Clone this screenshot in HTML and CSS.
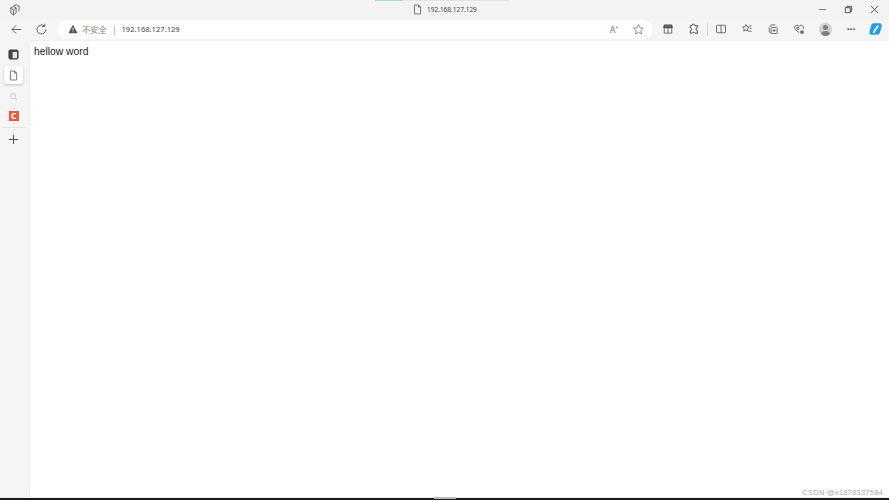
FILE: index.html
```html
<!DOCTYPE html>
<html lang="zh-CN">
  <head>
    <meta charset="UTF-8" />
    <title>192.168.127.129</title>
    <link rel="stylesheet" href="styles.css">
  </head>
  <body>
    <div class="window">
      <header class="titlebar">
        <svg class="workspace-icon" viewBox="0 0 16 16"><path d="M6 2.200 10 1l3.500 2v5.500L12 9.500M2.500 5 6 3.500 9.500 5v7L6 14.500 2.500 12zM2.500 5 6 8l3.500-3M6 8v6.500"/></svg>
        <div class="tab-title">
          <span class="tab-accent"></span>
          <svg class="page-icon" viewBox="0 0 16 16"><path d="M3.500 1.500h6l3 3v10h-9zM9.500 1.500v3h3"/></svg>
          <span>192.168.127.129</span>
        </div>
        <div class="window-controls">
          <svg class="win-min" viewBox="0 0 10 10"><path d="M1 5h8"/></svg>
          <svg viewBox="0 0 10 10"><path d="M1.500 3h5.500v5.500h-5.500zM3 3V1.500h5.500V7H7"/></svg>
          <svg viewBox="0 0 10 10"><path d="M1 1l8 8M9 1l-8 8"/></svg>
        </div>
      </header>

      <nav class="toolbar">
        <button class="nav-btn back">
          <svg viewBox="0 0 16 16"><path d="M14 8H2.500M7.500 3 2.500 8l5 5"/></svg>
        </button>
        <button class="nav-btn reload">
          <svg viewBox="0 0 16 16"><path d="M13.500 8A5.500 5.500 0 1 1 11.500 3.700M12 1v3.300H8.700"/></svg>
        </button>
        <div class="address">
          <svg class="warn-icon" viewBox="0 0 12 12"><path d="M6 1 11.500 11H.5z"/><path class="warn-mark" d="M6 4.500v3.200M6 8.800v1"/></svg>
          <span class="not-secure">不安全</span>
          <span class="separator">|</span>
          <span class="url">192.168.127.129</span>
          <span class="address-end">
            <span class="read-aloud">A<sup>ᴧ</sup></span>
            <svg class="addr-icon" viewBox="0 0 16 16"><path d="m8 2 1.800 3.900 4.200.5-3.100 2.900.8 4.200L8 11.400l-3.700 2.100.8-4.200L2 6.400l4.200-.5z"/></svg>
          </span>
        </div>
        <div class="tools">
          <span class="tool"><svg viewBox="0 0 16 16"><path class="fill" d="M3 2.500h10l1 4H2z"/><path d="M3 7v6.500h10V7M8 7v6.500"/></svg></span>
          <span class="tool"><svg viewBox="0 0 16 16"><path class="bold" d="M5 3.500a2 2 0 0 1 4 0h3.500V6a2.200 2.200 0 0 0 0 4.300v3.200H9a2 2 0 0 0-3.500 0H3v-3a2.200 2.200 0 0 0 0-4.300V3.500z"/></svg></span>
          <span class="tool-divider"></span>
          <span class="tool"><svg viewBox="0 0 16 16"><path d="M2 4a1 1 0 0 1 1-1h10a1 1 0 0 1 1 1v8a1 1 0 0 1-1 1H3a1 1 0 0 1-1-1zM8 3v10"/></svg></span>
          <span class="tool"><svg viewBox="0 0 16 16"><path d="m6.500 2 1.400 3 3.100.4-2.300 2.200.6 3.200-2.800-1.600-2.800 1.600.6-3.200L2 5.400l3.100-.4zM11 4h3M11.500 7.500H14M10 11h4"/></svg></span>
          <span class="tool"><svg viewBox="0 0 16 16"><path d="M5 5V3.500a1 1 0 0 1 1-1h5M6.500 6h6a1 1 0 0 1 1 1v6a1 1 0 0 1-1 1h-6a1 1 0 0 1-1-1V7a1 1 0 0 1 1-1zM9.500 8v4M7.500 10h4M3 6v5.500a1 1 0 0 0 1 1h1"/></svg></span>
          <span class="tool"><svg viewBox="0 0 16 16"><path d="M8 13 3 8.500a3 3 0 0 1 0-4.500 3 3 0 0 1 5 .5 3 3 0 0 1 5-.5 3 3 0 0 1 .5 4"/><circle cx="6.500" cy="7" r="1.500"/><circle class="green" cx="12" cy="12" r="2.500"/></svg></span>
          <span class="tool"><span class="avatar"><span class="avatar-head"></span><span class="avatar-body"></span></span></span>
          <span class="tool more">···</span>
          <span class="copilot"><svg viewBox="0 0 16 16"><path class="cop-blue" d="M5 1.500h7c2 0 3 1.500 2.500 3.500l-2 7c-.5 1.500-1.500 2.500-3 2.500H3c-2 0-3-1.500-2.500-3.500l2-7C3 2.500 3.800 1.500 5 1.500z"/><path class="cop-light" d="M10.500 4 5 12.500"/></svg></span>
        </div>
      </nav>

      <div class="body-row">
        <aside class="sidebar">
          <span class="side-btn"><svg viewBox="0 0 12 12"><rect class="side-dark" x="1" y="1" width="10" height="10" rx="1.500"/><path class="side-pane" d="M5 3.200h4.800v6.800H5z"/></svg></span>
          <span class="side-btn active"><svg viewBox="0 0 16 16"><path d="M3.500 1.500h6l3 3v10h-9zM9.500 1.500v3h3"/></svg></span>
          <span class="side-btn muted"><svg viewBox="0 0 12 12"><circle cx="5.500" cy="5.500" r="3.500"/><path d="m8 8 2.500 2.500"/></svg></span>
          <span class="side-btn"><span class="csdn">C</span></span>
          <span class="side-rule"></span>
          <span class="side-btn plus"><svg viewBox="0 0 12 12"><path d="M6 1v10M1 6h10"/></svg></span>
        </aside>
        <main class="content">
          <p class="page-text">hellow word</p>
          <span class="watermark">CSDN @x1878337584</span>
        </main>
      </div>
      <footer class="taskbar"><span class="task-thumb"></span></footer>
    </div>
  </body>
</html>
```

FILE: styles.css
```css
* {
  box-sizing: border-box;
}
html, body {
  margin: 0;
  height: 100%;
  overflow: hidden;
}
body {
  font-family: "Noto Sans", "Noto Sans CJK SC", sans-serif;
  color: #222;
  background: #f5f5f5;
}
svg {
  display: block;
  fill: none;
  stroke: #444;
  stroke-width: 1;
}
.window {
  display: flex;
  flex-direction: column;
  height: 500px;
}

/* title bar */
.titlebar {
  position: relative;
  display: flex;
  align-items: center;
  height: 19px;
  flex: none;
  padding-left: 9px;
  background: #f3f3f3;
}
.workspace-icon {
  width: 12px;
  height: 12px;
}
.tab-title {
  display: flex;
  align-items: center;
  gap: 4px;
  margin-left: 391px;
  font-size: 6.500px;
  color: #444;
}
.tab-title .page-icon {
  width: 11px;
  height: 11px;
}
.tab-accent {
  position: absolute;
  left: 375px;
  top: 0;
  width: 135px;
  height: 1px;
  background: linear-gradient(to right, #a5dcd6 0 28px, #e4e4e4 28px);
}
.window-controls {
  display: flex;
  gap: 17px;
  margin-left: auto;
  padding-right: 10px;
}
.window-controls svg {
  width: 9px;
  height: 9px;
}
.window-controls .win-min {
  stroke: #777;
}

/* toolbar */
.toolbar {
  display: flex;
  align-items: center;
  height: 22px;
  flex: none;
  padding-bottom: 2px;
  background: #f5f5f5;
}
.nav-btn {
  width: 25px;
  height: 20px;
  display: flex;
  align-items: center;
  justify-content: center;
  padding: 0;
  border: 0;
  background: none;
}
.nav-btn svg {
  width: 13px;
  height: 13px;
}
.back {
  margin-left: 4px;
}
.address {
  display: flex;
  align-items: center;
  width: 596px;
  height: 19px;
  margin-left: 3px;
  padding: 0 8px 0 11px;
  background: #fff;
  border-radius: 10px;
  font-size: 8.300px;
}
.warn-icon {
  width: 10px;
  height: 10px;
  fill: #555;
  stroke: none;
}
.warn-mark {
  stroke: #fff;
  stroke-width: 1;
}
.not-secure {
  margin-left: 4px;
  color: #888;
}
.separator {
  margin-left: 5px;
  color: #888;
}
.url {
  margin-left: 5px;
  font-size: 7.600px;
  color: #444;
}
.address-end {
  display: flex;
  align-items: center;
  gap: 14px;
  margin-left: auto;
}
.read-aloud {
  font-size: 9px;
  line-height: 1;
  color: #777;
}
.read-aloud sup {
  font-size: 5px;
}
.addr-icon {
  width: 13px;
  height: 13px;
  stroke: #777;
}
.tools {
  display: flex;
  align-items: center;
  margin-left: 2px;
}
.tool {
  display: flex;
  align-items: center;
  justify-content: center;
  width: 26px;
  height: 20px;
}
.tool svg {
  width: 12px;
  height: 12px;
}
.tool .fill {
  fill: #666;
}
.tool .bold {
  stroke-width: 1.300;
}
.tool .green {
  fill: #2e8b3d;
  stroke: none;
}
.tool-divider {
  width: 1px;
  height: 13px;
  background: #d4d4d4;
}
.avatar {
  position: relative;
  display: block;
  width: 13px;
  height: 13px;
  overflow: hidden;
  border-radius: 50%;
  background: #cfcfcf;
}
.avatar-head {
  position: absolute;
  left: 4px;
  top: 2px;
  width: 5px;
  height: 5px;
  border-radius: 50%;
  background: #808080;
}
.avatar-body {
  position: absolute;
  left: 2px;
  top: 8px;
  width: 9px;
  height: 7px;
  border-radius: 50%;
  background: #808080;
}
.more {
  font-size: 10px;
  font-weight: 700;
  color: #444;
}
.copilot {
  margin-left: 5px;
}
.copilot svg {
  width: 14px;
  height: 14px;
  stroke: none;
}
.cop-blue {
  fill: #2a9be0;
}
.cop-light {
  stroke: #bdf0e6;
  stroke-width: 2.500;
}

/* sidebar + page */
.body-row {
  display: flex;
  flex: 1;
  min-height: 0;
}
.sidebar {
  display: flex;
  flex-direction: column;
  align-items: center;
  width: 30px;
  flex: none;
  padding: 2px 3px 0 0;
}
.side-btn {
  display: flex;
  align-items: center;
  justify-content: center;
  width: 19px;
  height: 18px;
  margin-top: 2px;
}
.side-btn svg {
  width: 11px;
  height: 11px;
}
.side-dark {
  fill: #444;
}
.side-pane {
  fill: #e6e6e6;
  stroke: none;
}
.active {
  margin-top: 3px;
  background: #fff;
  border-radius: 3px;
  box-shadow: 0 1px 3px rgba(0, 0, 0, 0.22);
}
.muted {
  margin-top: 3px;
}
.muted svg {
  width: 9px;
  height: 9px;
  stroke: #bbb;
}
.csdn {
  display: flex;
  align-items: center;
  justify-content: center;
  width: 10px;
  height: 10px;
  font-size: 8px;
  font-weight: 700;
  line-height: 1;
  color: #fff;
  background: #ea5a3a;
}
.side-rule {
  width: 24px;
  height: 1px;
  margin-top: 2px;
  background: #e4e4e4;
}
.plus {
  margin-top: 2px;
}
.content {
  position: relative;
  flex: 1;
  background: #fff;
  border-radius: 4px 0 0 4px;
  box-shadow: 0 0 2px rgba(0, 0, 0, 0.08);
}
.page-text {
  margin: 4px 0 0 4px;
  font-family: "Liberation Sans", sans-serif;
  font-size: 10.300px;
  line-height: 13px;
  color: #222;
}
.watermark {
  position: absolute;
  right: 6px;
  bottom: 0;
  font-family: "Liberation Sans", sans-serif;
  font-size: 7.500px;
  letter-spacing: 0.250px;
  color: #aaa;
}
.taskbar {
  display: flex;
  justify-content: center;
  flex: none;
  height: 3px;
  background: linear-gradient(to bottom, #f0f0f0 0 1px, #1a1a1a 1px);
}
.task-thumb {
  width: 22px;
  height: 2px;
  background: #bbb;
}
```
